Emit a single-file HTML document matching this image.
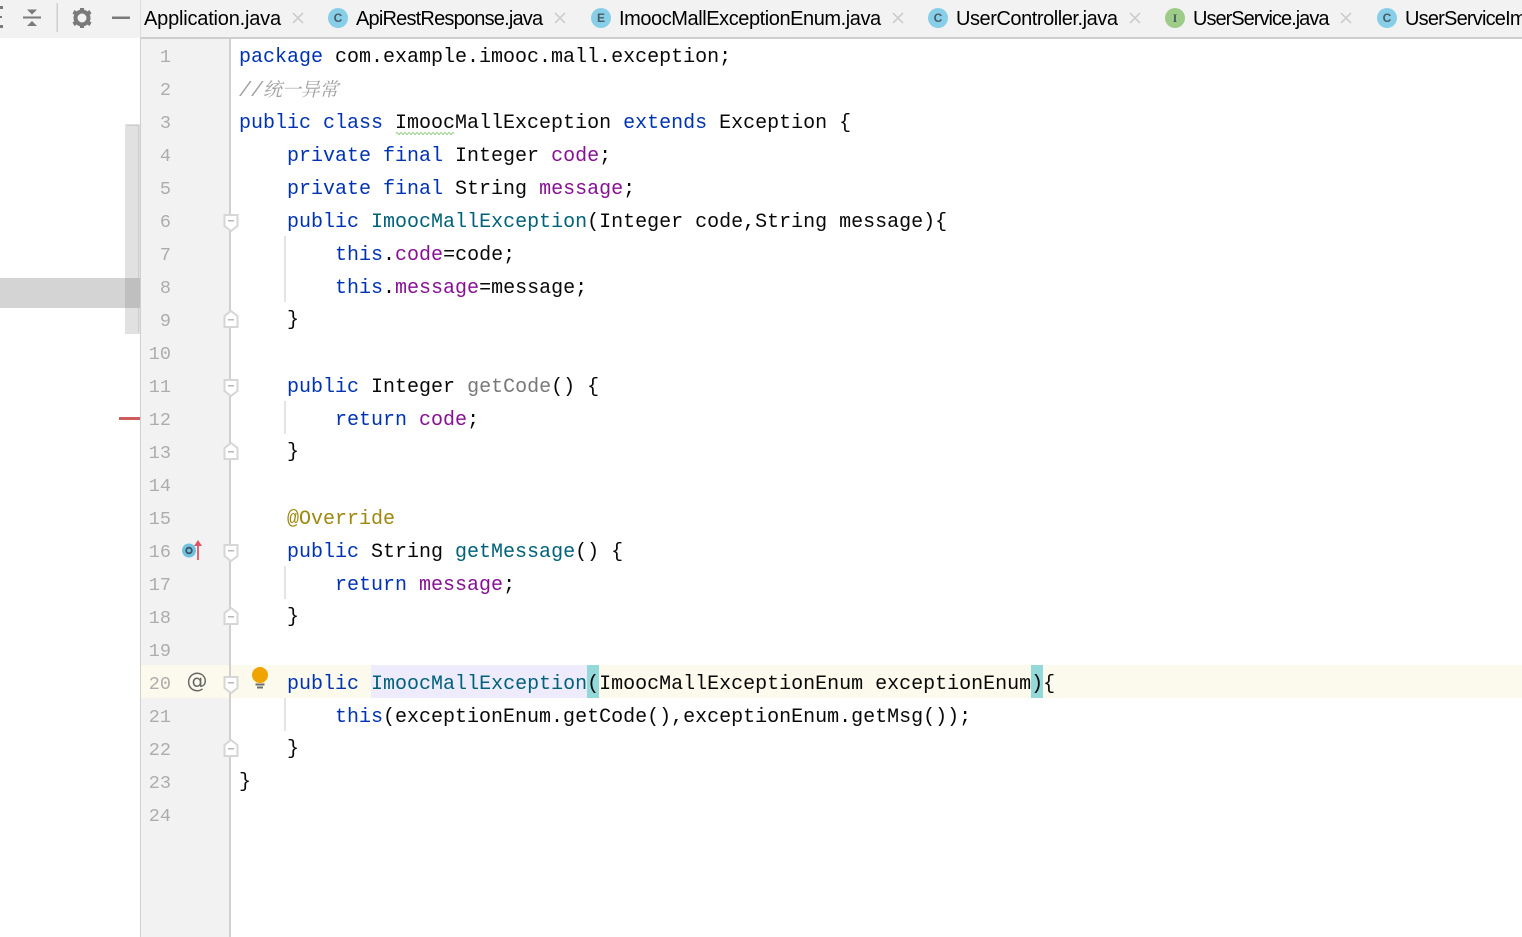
<!DOCTYPE html>
<html><head><meta charset="utf-8"><style>
html,body{margin:0;padding:0;background:#fff}
#r{position:relative;width:1522px;height:937px;overflow:hidden;background:#fff}
.a{position:absolute}
.l{position:absolute;left:239px;height:33px;font:20px/33px "Liberation Mono",monospace;white-space:pre;color:#080808;margin-top:1px}
.n{position:absolute;width:30px;left:141px;text-align:right;font:18.5px/33px "Liberation Mono",monospace;color:#adadad;height:33px;margin-top:1px}
.k{color:#0033b3}.f{color:#871094}.m{color:#00627a}.g{color:#787878}.o{color:#9e880d}.c{color:#8c8c8c;font-style:italic}
.t{position:absolute;top:5px;font:20px/28px "Liberation Sans",sans-serif;color:#000;white-space:pre}
.i{position:absolute;left:284px;width:2px;background:#e4e4e4}
svg{position:absolute;overflow:visible}
</style></head><body><div id="r">
<div class="a" style="left:0;top:0;width:1522px;height:38px;background:#f2f2f2"></div>
<div class="a" style="left:141px;top:37px;width:1381px;height:2px;background:#cdcdcd"></div>
<div class="a" style="left:140px;top:0;width:1px;height:38px;background:#dcdcdc"></div>

<svg style="left:0;top:0" width="140" height="38" fill="#7a7a7a">
<rect x="0" y="6" width="3" height="3"/><rect x="0" y="25" width="3" height="3"/><rect x="0" y="16" width="2" height="2"/>
<path d="M27 9.500h10l-5 5zM27 26h10l-5-5z"/><rect x="23" y="16.500" width="18" height="2"/>
<rect x="56.500" y="3" width="1.500" height="29" fill="#cfcfcf"/>
<circle cx="82" cy="18" r="6.500" fill="none" stroke="#7a7a7a" stroke-width="4"/>
<path d="M80 8h4v3h-4zM80 25h4v3h-4zM72.500 13.500l2-3.500 3 2-2 3.500zM91.500 13.500l-2-3.500-3 2 2 3.500zM72.500 22.500l2 3.500 3-2-2-3.500zM91.500 22.500l-2 3.500-3-2 2-3.500z"/>
<rect x="112" y="16.500" width="18" height="2.500"/>
</svg>

<div class="t" style="left:144px;letter-spacing:-.2px">Application.java</div>
<div class="t" style="left:356px;letter-spacing:-.8px">ApiRestResponse.java</div>
<div class="t" style="left:619px;letter-spacing:-.435px">ImoocMallExceptionEnum.java</div>
<div class="t" style="left:956px;letter-spacing:-.45px">UserController.java</div>
<div class="t" style="left:1193px;letter-spacing:-.98px">UserService.java</div>
<div class="t" style="left:1405px;letter-spacing:-.8px">UserServiceImpl.java</div>

<svg style="left:0;top:0" width="1522" height="38" font-family="Liberation Sans,sans-serif" font-size="12" font-weight="bold" text-anchor="middle" fill="#4a5a62">
<g stroke="#c9c9c9" stroke-width="1.500" fill="none"><path d="M293 13l10 10M303 13l-10 10M555 13l10 10M565 13l-10 10M893 13l10 10M903 13l-10 10M1130 13l10 10M1140 13l-10 10M1341 13l10 10M1351 13l-10 10"/></g>
<circle cx="338" cy="18" r="10" fill="#87cfe8"/><text x="338" y="22">C</text>
<circle cx="601" cy="18" r="10" fill="#87cfe8"/><text x="601" y="22">E</text>
<circle cx="938" cy="18" r="10" fill="#87cfe8"/><text x="938" y="22">C</text>
<circle cx="1175" cy="18" r="10" fill="#9ccc87"/><text x="1175" y="22" font-family="Liberation Serif,serif">I</text>
<circle cx="1387" cy="18" r="10" fill="#87cfe8"/><text x="1387" y="22">C</text>
</svg>

<div class="a" style="left:125px;top:124px;width:15px;height:210px;background:#e1e1e1"></div>
<div class="a" style="left:127px;top:125px;width:12px;height:1px;background:#cbcbcb"></div>
<div class="a" style="left:138px;top:125px;width:1px;height:207px;background:#cbcbcb"></div>
<div class="a" style="left:0;top:278px;width:125px;height:30px;background:#d4d4d4"></div>
<div class="a" style="left:125px;top:278px;width:15px;height:30px;background:#bfbfbf"></div>
<div class="a" style="left:119px;top:417px;width:21px;height:3px;background:#cd5c5c"></div>

<div class="a" style="left:140px;top:38px;width:1px;height:899px;background:#cfcfcf"></div>
<div class="a" style="left:141px;top:39px;width:88px;height:898px;background:#f2f2f2"></div>
<div class="a" style="left:141px;top:665px;width:1381px;height:33px;background:#fcfaed"></div>
<div class="a" style="left:229px;top:39px;width:2px;height:898px;background:#d0d0d0"></div>
<div class="a" style="left:371px;top:665px;width:216px;height:33px;background:#edebfc"></div>
<div class="a" style="left:587px;top:665px;width:12px;height:33px;background:#93d9d9"></div>
<div class="a" style="left:1031px;top:665px;width:12px;height:33px;background:#93d9d9"></div>

<div class="i" style="top:236px;height:66px"></div>
<div class="i" style="top:401px;height:33px"></div>
<div class="i" style="top:566px;height:33px"></div>
<div class="i" style="top:698px;height:33px"></div>

<div class="n" style="top:40px">1</div><div class="n" style="top:73px">2</div><div class="n" style="top:106px">3</div><div class="n" style="top:139px">4</div><div class="n" style="top:172px">5</div><div class="n" style="top:205px">6</div><div class="n" style="top:238px">7</div><div class="n" style="top:271px">8</div><div class="n" style="top:304px">9</div><div class="n" style="top:337px">10</div><div class="n" style="top:370px">11</div><div class="n" style="top:403px">12</div><div class="n" style="top:436px">13</div><div class="n" style="top:469px">14</div><div class="n" style="top:502px">15</div><div class="n" style="top:535px">16</div><div class="n" style="top:568px">17</div><div class="n" style="top:601px">18</div><div class="n" style="top:634px">19</div><div class="n" style="top:667px">20</div><div class="n" style="top:700px">21</div><div class="n" style="top:733px">22</div><div class="n" style="top:766px">23</div><div class="n" style="top:799px">24</div>

<svg style="left:0;top:0" width="300" height="937">
<g fill="#fff" stroke="#d6d6d6" stroke-width="2">
<path d="M224.500 215h13v11l-6.500 5-6.500-5z"/><path d="M224.500 380h13v11l-6.500 5-6.500-5z"/><path d="M224.500 545h13v11l-6.500 5-6.500-5z"/><path d="M224.500 677h13v11l-6.500 5-6.500-5z"/>
<path d="M224.500 327h13v-11l-6.500-5-6.500 5z"/><path d="M224.500 459h13v-11l-6.500-5-6.500 5z"/><path d="M224.500 624h13v-11l-6.500-5-6.500 5z"/><path d="M224.500 756h13v-11l-6.500-5-6.500 5z"/>
</g>
<g fill="#b8b8b8"><rect x="228" y="220" width="6" height="1.500"/><rect x="228" y="385" width="6" height="1.500"/><rect x="228" y="550" width="6" height="1.500"/><rect x="228" y="682" width="6" height="1.500"/><rect x="228" y="319" width="6" height="1.500"/><rect x="228" y="451" width="6" height="1.500"/><rect x="228" y="616" width="6" height="1.500"/><rect x="228" y="748" width="6" height="1.500"/></g>
<circle cx="189" cy="550.500" r="7" fill="#6fc2df"/><circle cx="189" cy="550.500" r="2.800" fill="none" stroke="#3d5560" stroke-width="1.800"/>
<path d="M198 560v-18" stroke="#e05565" stroke-width="1.800"/><path d="M194 546l4-6 4 6z" fill="#e05565"/>
<circle cx="260" cy="675" r="8" fill="#f0a400"/><path d="M255 678h10l-1 4.500h-8z" fill="#f0a400"/><rect x="255.500" y="683.500" width="9" height="2" fill="#6e6e6e"/><rect x="257" y="686.500" width="6" height="2" fill="#6e6e6e"/>
<text x="197" y="688" font-family="DejaVu Sans,sans-serif" font-size="21" text-anchor="middle" fill="#666">@</text>
<path d="M396 133.500q1-2 2-0t2 0 2 0 2 0 2 0 2 0 2 0 2 0 2 0 2 0 2 0 2 0 2 0 2 0 2 0 2 0 2 0 2 0 2 0 2 0 2 0 2 0 2 0 2 0 2 0 2 0 2 0 2 0 2 0" fill="none" stroke="#8fcf7f" stroke-width="1"/>
</svg>

<div class="l" style="top:40px"><span class="k">package</span> com.example.imooc.mall.exception;</div>
<div class="l c" style="top:71px;color:#a0a0a0">//<span style="font:italic 19px/33px 'Noto Serif CJK SC','Liberation Mono',serif;letter-spacing:-.2px">统一异常</span></div>
<div class="l" style="top:106px"><span class="k">public class</span> ImoocMallException <span class="k">extends</span> Exception {</div>
<div class="l" style="top:139px">    <span class="k">private final</span> Integer <span class="f">code</span>;</div>
<div class="l" style="top:172px">    <span class="k">private final</span> String <span class="f">message</span>;</div>
<div class="l" style="top:205px">    <span class="k">public</span> <span class="m">ImoocMallException</span>(Integer code,String message){</div>
<div class="l" style="top:238px">        <span class="k">this</span>.<span class="f">code</span>=code;</div>
<div class="l" style="top:271px">        <span class="k">this</span>.<span class="f">message</span>=message;</div>
<div class="l" style="top:303px">    }</div>
<div class="l" style="top:370px">    <span class="k">public</span> Integer <span class="g">getCode</span>() {</div>
<div class="l" style="top:403px">        <span class="k">return</span> <span class="f">code</span>;</div>
<div class="l" style="top:435px">    }</div>
<div class="l" style="top:502px">    <span class="o">@Override</span></div>
<div class="l" style="top:535px">    <span class="k">public</span> String <span class="m">getMessage</span>() {</div>
<div class="l" style="top:568px">        <span class="k">return</span> <span class="f">message</span>;</div>
<div class="l" style="top:600px">    }</div>
<div class="l" style="top:667px">    <span class="k">public</span> <span class="m">ImoocMallException</span>(ImoocMallExceptionEnum exceptionEnum){</div>
<div class="l" style="top:700px">        <span class="k">this</span>(exceptionEnum.getCode(),exceptionEnum.getMsg());</div>
<div class="l" style="top:732px">    }</div>
<div class="l" style="top:765px">}</div>
</div></body></html>
